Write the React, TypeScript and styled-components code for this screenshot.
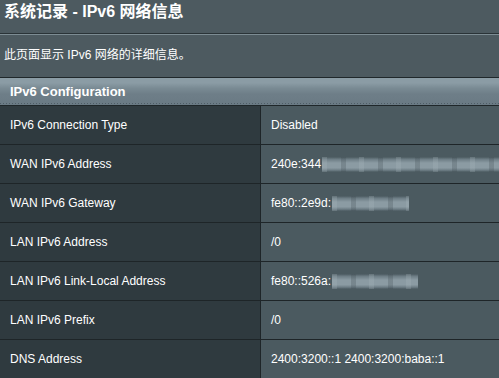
import React from "react";
import styled, { createGlobalStyle } from "styled-components";

const Global = createGlobalStyle`
  html, body { margin: 0; padding: 0; background: #4d5a60; }
  body { font-family: "Liberation Sans", Arial, "Noto Sans CJK SC", sans-serif; overflow: hidden; }
`;

const Page = styled.div`
  width: 499px;
  height: 378px;
  background: #4d5a60;
  color: #fff;
  overflow: hidden;
`;

const Title = styled.h1`
  margin: 0;
  height: 33px;
  box-sizing: border-box;
  padding: 2px 0 0 4px;
  font-size: 16px;
  line-height: 20px;
  font-weight: bold;
  font-family: "Liberation Sans", Arial, "Noto Sans CJK SC", sans-serif;
  color: #fff;
`;

const Rule = styled.div`
  height: 1px;
  background: #2a3337;
  border-bottom: 1px solid #7d8c93;
`;

const Subtitle = styled.p`
  margin: 0;
  height: 42px;
  box-sizing: border-box;
  padding: 12px 0 0 4px;
  font-size: 12px;
  line-height: 16px;
  color: #fff;
`;

const Table = styled.div`
  border-top: 1px solid #20282b;
`;

const HeadBar = styled.div`
  height: 28px;
  box-sizing: border-box;
  padding-left: 10px;
  display: flex;
  align-items: center;
  font-size: 13px;
  font-weight: bold;
  color: #fff;
  background:
    repeating-linear-gradient(90deg, #4e5c65 0 1px, transparent 1px 3px) 0 25px / 100% 1px no-repeat,
    linear-gradient(180deg, #8b9ca5 0px, #8b9ca5 5px, #7a8b94 10px, #6e7e88 16px, #6a7a84 27px);
  border-bottom: 1px solid #1f272a;
`;

const Row = styled.div`
  display: grid;
  grid-template-columns: 261px 1fr;
  height: 39px;
  box-sizing: border-box;
  border-bottom: 1px solid #1e2528;
`;

const Label = styled.div`
  display: flex;
  align-items: center;
  padding-left: 10px;
  background: #2f3a3f;
  border-right: 1px solid #1e2528;
  font-size: 12px;
  color: #fff;
`;

const Value = styled.div`
  display: flex;
  align-items: center;
  padding-left: 10px;
  background: #4b5a60;
  font-size: 12px;
  color: #fff;
  white-space: nowrap;
  overflow: hidden;
`;

const Smudge = styled.span<{ $w: number }>`
  display: inline-block;
  flex: none;
  width: ${(p) => p.$w}px;
  height: 15px;
  margin-left: 1px;
  background:
    repeating-linear-gradient(90deg, rgba(170, 184, 190, 0.25) 0 5px, transparent 5px 19px, rgba(60, 72, 78, 0.25) 19px 24px, transparent 24px 37px),
    linear-gradient(180deg, transparent 0, #6d7d85 15%, #8b9ba3 40%, #8b9ba3 72%, #6d7d85 88%, transparent 100%);
`;

type Cell = { text: string; blur?: number };
const rows: { label: string; value: Cell }[] = [
  { label: "IPv6 Connection Type", value: { text: "Disabled" } },
  { label: "WAN IPv6 Address", value: { text: "240e:344", blur: 200 } },
  { label: "WAN IPv6 Gateway", value: { text: "fe80::2e9d:", blur: 77 } },
  { label: "LAN IPv6 Address", value: { text: "/0" } },
  { label: "LAN IPv6 Link-Local Address", value: { text: "fe80::526a:", blur: 86 } },
  { label: "LAN IPv6 Prefix", value: { text: "/0" } },
  { label: "DNS Address", value: { text: "2400:3200::1 2400:3200:baba::1" } },
];

export default function App() {
  return (
    <Page>
      <Global />
      <Title>系统记录 - IPv6 网络信息</Title>
      <Rule />
      <Subtitle>此页面显示 IPv6 网络的详细信息。</Subtitle>
      <Table>
        <HeadBar>IPv6 Configuration</HeadBar>
        {rows.map((r) => (
          <Row key={r.label}>
            <Label>{r.label}</Label>
            <Value>
              {r.value.text}
              {r.value.blur ? <Smudge $w={r.value.blur} /> : null}
            </Value>
          </Row>
        ))}
      </Table>
    </Page>
  );
}
